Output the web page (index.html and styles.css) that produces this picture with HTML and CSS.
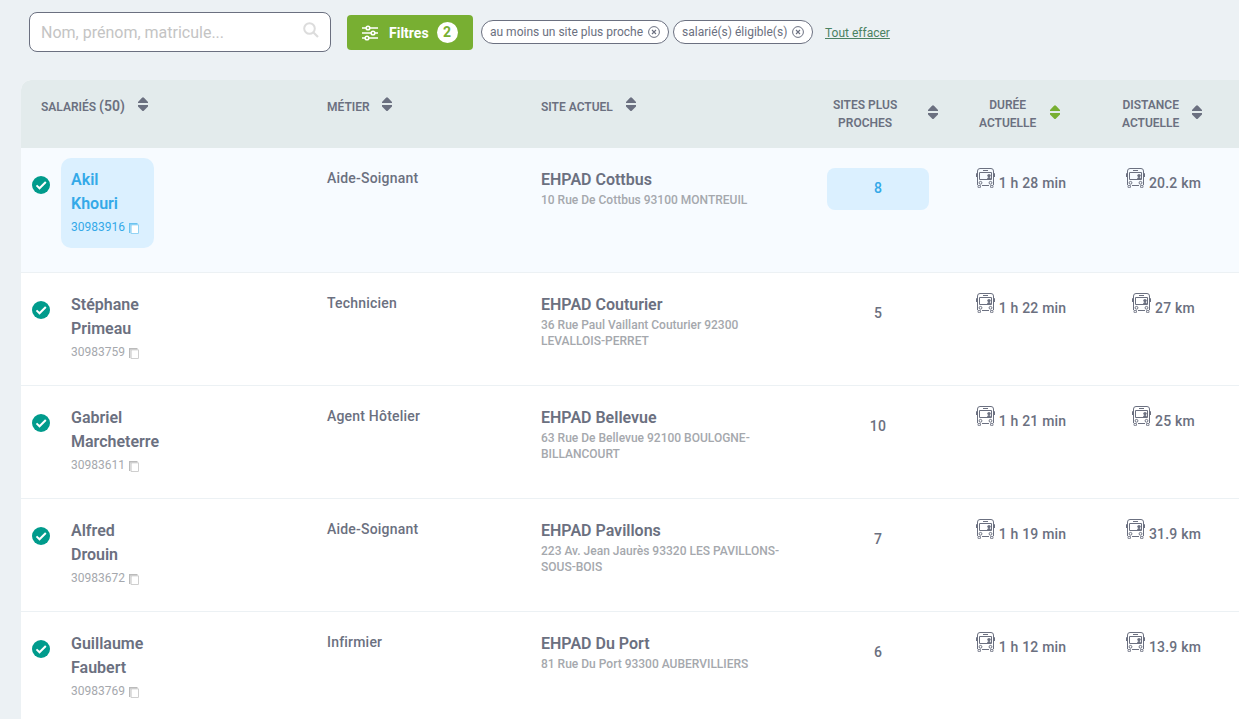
FILE: index.html
```html
<!DOCTYPE html>
<html lang="fr">
<head>
<meta charset="utf-8">
<title>Salariés</title>
<link rel="stylesheet" href="styles.css">
</head>
<body>
<svg class="defs" aria-hidden="true">
  <symbol id="sort" viewBox="0 0 10 14"><path d="M0 6V5L4 .7Q5-.3 6 .7L10 5V6ZM0 8H10V9.5L6 13.4Q5 14.4 4 13.4L0 9.5Z" fill="currentColor"/></symbol>
  <symbol id="close" viewBox="0 0 12 12"><circle cx="6" cy="6" r="5.4" fill="none" stroke="currentColor"/><path d="M4 4L8 8M8 4L4 8" stroke="currentColor" stroke-width="1.1"/></symbol>
  <symbol id="check" viewBox="0 0 18 18"><circle cx="9" cy="9" r="9" fill="currentColor"/><path d="M4.5 9.4L7.5 12.3L13.8 6" fill="none" stroke="#fff" stroke-width="2"/></symbol>
  <symbol id="copy" viewBox="0 0 10 11"><path d="M.7 10V.7H8.5" fill="none" stroke="currentColor" stroke-width="1.4"/><rect x="2.1" y="1.9" width="7.5" height="8.7" fill="#fff" stroke="currentColor" stroke-width=".7"/></symbol>
  <symbol id="bus" viewBox="0 0 19 20"><g fill="none" stroke="currentColor" stroke-width="1"><path d="M1.5 17V3Q1.5 .5 4 .5H15Q17.5 .5 17.5 3V17M7 2.5H12M1.5 5.5H.5V9M17.5 5.5H18.5V9M3.5 4.5H15.5V11.5H3.5ZM6 17.5H13"/><circle cx="4.5" cy="14.8" r="1.4"/><circle cx="14.5" cy="14.8" r="1.4"/><path d="M2 17.5V19.4H4.5V17.5ZM14.5 17.5V19.4H17V17.5Z" stroke-width=".8"/></g><circle cx="13" cy="7.6" r="1.7" fill="currentColor"/><path d="M11.2 11V9.8H12.2V8.5H13.8V9.8H14.8V11Z" fill="currentColor"/></symbol>
</svg>

<header class="toolbar">
  <label class="search">
    <input class="search-input" type="text" placeholder="Nom, prénom, matricule...">
    <svg class="search-icon" viewBox="0 0 16 16"><circle cx="6.5" cy="6.5" r="5.3" fill="none" stroke="currentColor" stroke-width="2"/><path d="M10.5 10.5L15 15" stroke="currentColor" stroke-width="2.2"/></svg>
  </label>
  <button class="filters">
    <svg class="filters-icon" viewBox="0 0 16 16"><g fill="none" stroke="currentColor" stroke-width="1.6"><path d="M0 3H4M8 3H16M0 8H9M13 8H16M0 13H3M7 13H16"/><circle cx="6" cy="3" r="1.8"/><circle cx="11" cy="8" r="1.8"/><circle cx="5" cy="13" r="1.8"/></g></svg>
    <span class="filters-label">Filtres</span>
    <span class="filters-count">2</span>
  </button>
  <span class="chip chip-wide">au moins un site plus proche<svg class="chip-close"><use href="#close"/></svg></span>
  <span class="chip">salarié(s) éligible(s)<svg class="chip-close"><use href="#close"/></svg></span>
  <a class="clear" href="#">Tout effacer</a>
</header>

<main class="table">
  <div class="row head">
    <div class="th th-first"><span>SALARIÉS <span class="total">(50)</span></span><svg class="sort"><use href="#sort"/></svg></div>
    <div class="th th-job"><span>MÉTIER</span><svg class="sort"><use href="#sort"/></svg></div>
    <div class="th"><span>SITE ACTUEL</span><svg class="sort"><use href="#sort"/></svg></div>
    <div class="th th-multi th-closer"><span>SITES PLUS<br>PROCHES</span><svg class="sort"><use href="#sort"/></svg></div>
    <div class="th th-multi"><span>DURÉE<br>ACTUELLE</span><svg class="sort sort-active"><use href="#sort"/></svg></div>
    <div class="th th-multi th-distance"><span>DISTANCE<br>ACTUELLE</span><svg class="sort"><use href="#sort"/></svg></div>
  </div>

  <div class="row item selected">
    <svg class="check"><use href="#check"/></svg>
    <div class="person"><div class="name">Akil<br>Khouri</div><div class="id">30983916<svg class="copy"><use href="#copy"/></svg></div></div>
    <div class="job">Aide-Soignant</div>
    <div class="site"><div class="site-name">EHPAD Cottbus</div><div class="address">10 Rue De Cottbus 93100 MONTREUIL</div></div>
    <div class="closer">8</div>
    <div class="trip"><svg class="bus"><use href="#bus"/></svg><span>1 h 28 min</span></div>
    <div class="trip"><svg class="bus"><use href="#bus"/></svg><span>20.2 km</span></div>
  </div>

  <div class="row item">
    <svg class="check"><use href="#check"/></svg>
    <div class="person"><div class="name">Stéphane<br>Primeau</div><div class="id">30983759<svg class="copy"><use href="#copy"/></svg></div></div>
    <div class="job">Technicien</div>
    <div class="site"><div class="site-name">EHPAD Couturier</div><div class="address">36 Rue Paul Vaillant Couturier 92300<br>LEVALLOIS-PERRET</div></div>
    <div class="closer">5</div>
    <div class="trip"><svg class="bus"><use href="#bus"/></svg><span>1 h 22 min</span></div>
    <div class="trip"><svg class="bus"><use href="#bus"/></svg><span>27 km</span></div>
  </div>

  <div class="row item">
    <svg class="check"><use href="#check"/></svg>
    <div class="person"><div class="name">Gabriel<br>Marcheterre</div><div class="id">30983611<svg class="copy"><use href="#copy"/></svg></div></div>
    <div class="job">Agent Hôtelier</div>
    <div class="site"><div class="site-name">EHPAD Bellevue</div><div class="address">63 Rue De Bellevue 92100 BOULOGNE-<br>BILLANCOURT</div></div>
    <div class="closer">10</div>
    <div class="trip"><svg class="bus"><use href="#bus"/></svg><span>1 h 21 min</span></div>
    <div class="trip"><svg class="bus"><use href="#bus"/></svg><span>25 km</span></div>
  </div>

  <div class="row item">
    <svg class="check"><use href="#check"/></svg>
    <div class="person"><div class="name">Alfred<br>Drouin</div><div class="id">30983672<svg class="copy"><use href="#copy"/></svg></div></div>
    <div class="job">Aide-Soignant</div>
    <div class="site"><div class="site-name">EHPAD Pavillons</div><div class="address">223 Av. Jean Jaurès 93320 LES PAVILLONS-<br>SOUS-BOIS</div></div>
    <div class="closer">7</div>
    <div class="trip"><svg class="bus"><use href="#bus"/></svg><span>1 h 19 min</span></div>
    <div class="trip"><svg class="bus"><use href="#bus"/></svg><span>31.9 km</span></div>
  </div>

  <div class="row item">
    <svg class="check"><use href="#check"/></svg>
    <div class="person"><div class="name">Guillaume<br>Faubert</div><div class="id">30983769<svg class="copy"><use href="#copy"/></svg></div></div>
    <div class="job">Infirmier</div>
    <div class="site"><div class="site-name">EHPAD Du Port</div><div class="address">81 Rue Du Port 93300 AUBERVILLIERS</div></div>
    <div class="closer">6</div>
    <div class="trip"><svg class="bus"><use href="#bus"/></svg><span>1 h 12 min</span></div>
    <div class="trip"><svg class="bus"><use href="#bus"/></svg><span>13.9 km</span></div>
  </div>
</main>
</body>
</html>
```
FILE: styles.css
```css
* { box-sizing: border-box; }
body {
  margin: 0;
  height: 719px;
  overflow: hidden;
  background: #ecf1f4;
  color: #6b7080;
  font-family: Roboto, "Liberation Sans", sans-serif;
  white-space: nowrap;
}
svg { display: block; flex: none; }
.defs { width: 0; height: 0; position: absolute; }

.toolbar { display: flex; align-items: flex-start; height: 80px; padding: 12px 0 0 29px; }
.search {
  display: flex;
  width: 302px;
  height: 40px;
  padding: 0 11px;
  border: 1px solid #6b7080;
  border-radius: 8px;
  background: #fff;
}
.search-input { flex: 1; min-width: 0; padding: 0; border: 0; outline: 0; background: none; font: 16px Roboto, sans-serif; }
.search-input::placeholder { color: #c4c4c4; }
.search-icon { width: 16px; height: 16px; margin: 9px 0 0; color: #dcdcdc; }
.filters {
  display: flex;
  align-items: center;
  width: 126px;
  height: 35px;
  margin: 3px 8px 0 16px;
  padding: 0 15px;
  border: 0;
  border-radius: 4px;
  background: #78af32;
  color: #fff;
  font: 700 14px Roboto, sans-serif;
}
.filters-icon { width: 16px; height: 16px; }
.filters-label { margin: 0 8px 0 11px; }
.filters-count { width: 21px; height: 21px; border-radius: 50%; background: #fff; color: #78af32; line-height: 21px; text-align: center; }
.chip {
  display: flex;
  align-items: center;
  justify-content: space-between;
  width: 140px;
  height: 24px;
  margin: 8px 12px 0 0;
  padding: 0 8px;
  border: 1px solid #6b7080;
  border-radius: 12px;
  background: #fff;
  font-size: 12px;
}
.chip-wide { width: 188px; margin-right: 4px; }
.chip-close { width: 12px; height: 12px; }
.clear { margin-top: 13px; color: #4b8262; font-size: 12px; line-height: 16px; }

.table { margin-left: 21px; overflow: hidden; border-radius: 10px 0 0; background: #fff; }
.row { display: grid; grid-template-columns: 40px 256px 214px 286px 132px 144px 141px; }
.head { height: 68px; background: #e3ebec; font-size: 12px; font-weight: 600; line-height: 18px; }
.th { display: flex; padding: 17px 0 0 10px; }
.th > span { padding-top: 1px; }
.th-first { grid-column: span 2; padding-left: 20px; }
.total { font-size: 14px; line-height: 16px; }
.sort { width: 10px; height: 14px; margin-left: 13px; }
.th-job .sort { margin-left: 12px; }
.sort-active { color: #78af32; }
.th-multi { padding: 16px 0 0 30px; text-align: center; }
.th-multi > span { padding-top: 0; }
.th-multi .sort { margin: 9px 0 0 14px; }
.th-closer { padding-left: 16px; }
.th-closer .sort { margin-left: 31px; }
.th-distance { padding-left: 29px; }
.th-distance .sort { margin-left: 13px; }

.item { height: 113px; border-bottom: 1px solid #ecf1f4; font-size: 14px; font-weight: 500; letter-spacing: .2px; }
.selected { height: 125px; background: #f7fbff; }
.check { width: 18px; height: 18px; margin: 28px 0 0 11px; color: #009b8c; }
.person { justify-self: start; height: 90px; margin-top: 10px; padding: 10px; border-radius: 10px; letter-spacing: 0; }
.name { font-size: 16px; font-weight: 600; line-height: 24px; }
.id { display: flex; align-items: center; gap: 4px; color: #a5a8ad; font-size: 12px; font-weight: 400; line-height: 23px; }
.copy { width: 10px; height: 11px; margin-top: 1px; color: #bbb; }
.selected .person { width: 93px; background: #dbf0ff; color: #34a9e8; }
.selected .id { color: #34a9e8; }
.selected .copy { color: #6bc3f0; }
.job { padding: 20px 10px; line-height: 20px; }
.site { padding: 20px 10px; letter-spacing: 0; }
.site-name { font-size: 16px; font-weight: 600; line-height: 24px; }
.address { color: #a5a8ad; font-size: 12px; line-height: 16px; }
.closer { width: 102px; height: 42px; margin: 20px 0 0 -10px; justify-self: center; border-radius: 8px; line-height: 40px; text-align: center; }
.selected .closer { background: #dbf0ff; color: #34a9e8; }
.trip { display: flex; justify-content: center; gap: 4px; padding-top: 20px; line-height: 30px; }
.bus { width: 19px; height: 20px; }
```
